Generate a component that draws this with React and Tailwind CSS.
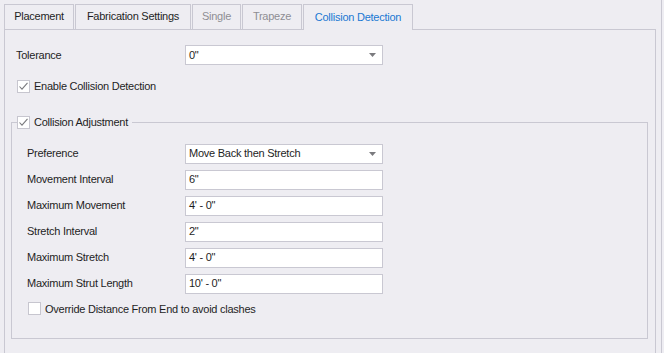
import React from 'react';

// Tab header
const Tab = ({ label, width, active, disabled }) => (
  <div
    className={`flex items-center justify-center pb-px border-t border-l border-r border-[#c9c8d2] shrink-0 mr-px ${
      active ? 'h-[26px] bg-[#eeedf2] text-[#1a78d2]' : 'h-[25px]'
    } ${disabled ? 'text-[#8e8e94]' : ''}`}
    style={{ width }}
  >
    {label}
  </div>
);

const Check = ({ checked }) => (
  <span className="w-[13px] h-[13px] border border-[#c7c6cf] bg-white flex items-center justify-center shrink-0">
    {checked && (
      <svg width="11" height="11" viewBox="0 0 11 11">
        <polyline points="1.5,5.5 4,8.2 9.5,1.8" fill="none" stroke="#7a7a7e" strokeWidth="1.1" />
      </svg>
    )}
  </span>
);

const Field = ({ value, dropdown }) => (
  <div className="w-[198px] h-[20px] border border-[#c9c8d2] bg-white flex items-center pl-[3px] pr-[6px]">
    <span className="flex-1">{value}</span>
    {dropdown && (
      <svg width="7" height="4" viewBox="0 0 7 4">
        <polygon points="0,0 7,0 3.5,4" fill="#7a7a7e" />
      </svg>
    )}
  </div>
);

const Row = ({ label, value, dropdown, labelWidth }) => (
  <div className="flex items-center">
    <div className="shrink-0" style={{ width: labelWidth }}>{label}</div>
    <Field value={value} dropdown={dropdown} />
  </div>
);

const rows = [
  { label: 'Preference', value: 'Move Back then Stretch', dropdown: true },
  { label: 'Movement Interval', value: '6"' },
  { label: 'Maximum Movement', value: '4\' - 0"' },
  { label: 'Stretch Interval', value: '2"' },
  { label: 'Maximum Stretch', value: '4\' - 0"' },
  { label: 'Maximum Strut Length', value: '10\' - 0"' },
];

export default function App() {
  return (
    <div className="w-[664px] h-[353px] bg-[#eeedf2] overflow-hidden font-['Liberation_Sans',Arial,sans-serif] text-[11px] tracking-[-0.25px] text-[#1e1e1e]">
      <div className="w-[662px] h-full border-r border-[#c9c8d2] pl-[4px] pt-[4px] flex flex-col">
        {/* Tabs */}
        <div className="flex items-start h-[25px] relative z-10">
          <Tab label="Placement" width={70} />
          <Tab label="Fabrication Settings" width={116} />
          <Tab label="Single" width={49} disabled />
          <Tab label="Trapeze" width={60} disabled />
          <Tab label="Collision Detection" width={110} active />
        </div>

        {/* Panel */}
        <div className="w-[652px] flex-1 border border-b-0 border-[#c9c8d2] pt-[15px]">
          <div className="pl-[11px]">
            <Row label="Tolerance" value={'0"'} dropdown labelWidth={169} />
          </div>

          <div className="flex items-center gap-[4px] pl-[12px] mt-[13px]">
            <Check checked />
            <span>Enable Collision Detection</span>
          </div>

          <fieldset className="ml-[6px] mt-[21px] w-[637px] h-[223px] border border-[#c9c8d2]">
            <legend className="ml-[5px] pr-[4px] flex items-center gap-[4px] h-[14px]">
              <Check checked />
              <span>Collision Adjustment</span>
            </legend>
            <div className="pl-[15px] pt-[14px] flex flex-col gap-[6px]">
              {rows.map((r) => (
                <Row key={r.label} {...r} labelWidth={158} />
              ))}
            </div>
            <div className="flex items-center gap-[4px] pl-[16px] mt-[7px]">
              <Check />
              <span>Override Distance From End to avoid clashes</span>
            </div>
          </fieldset>
        </div>
      </div>
    </div>
  );
}
